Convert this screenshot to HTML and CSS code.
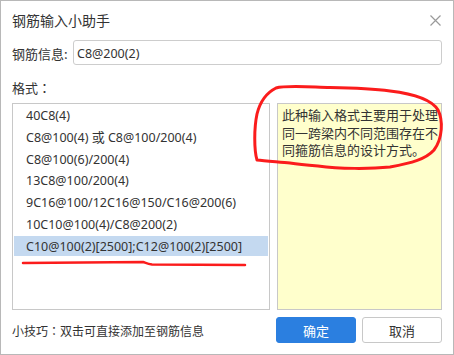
FILE: index.html
```html
<!DOCTYPE html>
<html lang="zh-CN">
<head>
    <meta charset="UTF-8">
    <meta name="viewport" content="width=device-width, initial-scale=1.0">
    <title>钢筋输入小助手</title>
    <link rel="stylesheet" href="styles.css">
</head>
<body>
    <div class="dialog">
        <div class="dialog-head">
            <span class="dialog-title">钢筋输入小助手</span>
            <svg class="close" width="11" height="11" viewBox="0 0 11 11">
                <path d="M0.5 0.5 L10.5 10.5 M10.5 0.5 L0.5 10.5" stroke="#9a9a9a" stroke-width="1.2" fill="none"/>
            </svg>
        </div>
        <div class="field">
            <label class="field-label">钢筋信息:</label>
            <div class="field-input"><span class="latin">C8@200(2)</span></div>
        </div>
        <div class="section-label">格式<span class="colon" lang="zh-TW">：</span></div>
        <div class="panels">
            <ul class="format-list">
                <li><span class="latin">40C8(4)</span></li>
                <li><span class="latin">C8@100(4) </span>或<span class="latin"> C8@100/200(4)</span></li>
                <li><span class="latin">C8@100(6)/200(4)</span></li>
                <li><span class="latin">13C8@100/200(4)</span></li>
                <li><span class="latin">9C16@100/12C16@150/C16@200(6)</span></li>
                <li><span class="latin">10C10@100(4)/C8@200(2)</span></li>
                <li class="selected"><span class="latin">C10@100(2)[2500];C12@100(2)[2500]</span></li>
            </ul>
            <div class="note">此种输入格式主要用于处理同一跨梁内不同范围存在不同箍筋信息的设计方式。</div>
        </div>
        <div class="dialog-foot">
            <span class="tip">小技巧<span class="colon" lang="zh-TW">：</span>双击可直接添加至钢筋信息</span>
            <div class="buttons">
                <button class="btn btn-primary">确定</button>
                <button class="btn">取消</button>
            </div>
        </div>

        <!-- red hand-drawn marks -->
        <svg class="marks" width="454" height="355" viewBox="0 0 454 355">
            <path d="M330 87.5 C355 88 375 89 390 91 C415 94 432 100 438 110 C443 120 443 138 434 150 C426 159 412 163 390 167 C370 169 340 169 318 166 C305 165 296 164 290 163 C280 162 265 161 257 160 C254 150 254 128 257 114 C260 102 266 93 276 88 C286 85 310 87 330 87.5 Z"
                  fill="none" stroke="#fb1c1c" stroke-width="3" stroke-linejoin="round"/>
            <path d="M23 263 L143 262 C146 263 148 264 152 264.5 L245 265"
                  fill="none" stroke="#fb1c1c" stroke-width="2.5" stroke-linecap="round"/>
        </svg>
    </div>
</body>
</html>
```

FILE: styles.css
```css
* {
    box-sizing: border-box;
}
body {
    margin: 0;
    background: #fff;
    font-family: "Noto Sans CJK SC", sans-serif;
    font-size: 13px;
    color: #333;
}
.latin {
    font-family: "Noto Sans", "Noto Sans CJK SC", sans-serif;
    font-size: 12.5px;
}
.colon {
    font-family: "Noto Sans CJK TC", sans-serif;
}
.dialog {
    position: relative;
    width: 454px;
    height: 355px;
    border: 1px solid #b8b8b8;
    padding: 0 11px;
    display: flex;
    flex-direction: column;
}
.dialog-head {
    height: 39px;
    padding-top: 9px;
    display: flex;
    justify-content: space-between;
    align-items: flex-start;
}
.dialog-title {
    font-size: 14px;
    line-height: 20px;
}
.close {
    margin-top: 5px;
    margin-right: 1px;
}
.field {
    display: flex;
    align-items: center;
    height: 25px;
}
.field-label {
    width: 61px;
    line-height: 25px;
    padding-top: 1px;
}
.field-input {
    flex: 1;
    height: 25px;
    border: 1px solid #cdcdcd;
    border-radius: 3px;
    padding-left: 3px;
    line-height: 23px;
}
.section-label {
    margin-top: 13px;
    margin-bottom: 5px;
    line-height: 20px;
}
.panels {
    display: grid;
    grid-template-columns: 258px 1fr;
    gap: 7px;
    height: 207px;
}
.format-list {
    list-style: none;
    margin: 0;
    padding: 0 1px;
    border: 1px solid #c8c8c8;
}
.format-list li {
    height: 20px;
    line-height: 20px;
    margin-top: 1.83px;
    padding-left: 12px;
    white-space: nowrap;
}
.format-list li:first-child {
    margin-top: 1px;
}
.format-list li.selected {
    background: #c4d9f0;
}
.note {
    background: #ffffcc;
    border: 1px solid #c8c8c8;
    padding: 2px 2px 0 4px;
    line-height: 17.5px;
}
.dialog-foot {
    margin-top: 7px;
    display: flex;
    justify-content: space-between;
    align-items: center;
}
.tip {
    font-size: 12px;
    padding-top: 1px;
}
.buttons {
    display: flex;
    gap: 6px;
}
.btn {
    width: 80px;
    height: 26px;
    border: 1px solid #c8c8c8;
    border-radius: 3px;
    background: #fff;
    color: #333;
    font-family: "Noto Sans CJK SC", sans-serif;
    font-size: 13px;
    padding: 0;
}
.btn-primary {
    background: #2b7fe0;
    border-color: #2b7fe0;
    color: #fff;
}
.marks {
    position: absolute;
    left: -1px;
    top: -1px;
    pointer-events: none;
}
```
